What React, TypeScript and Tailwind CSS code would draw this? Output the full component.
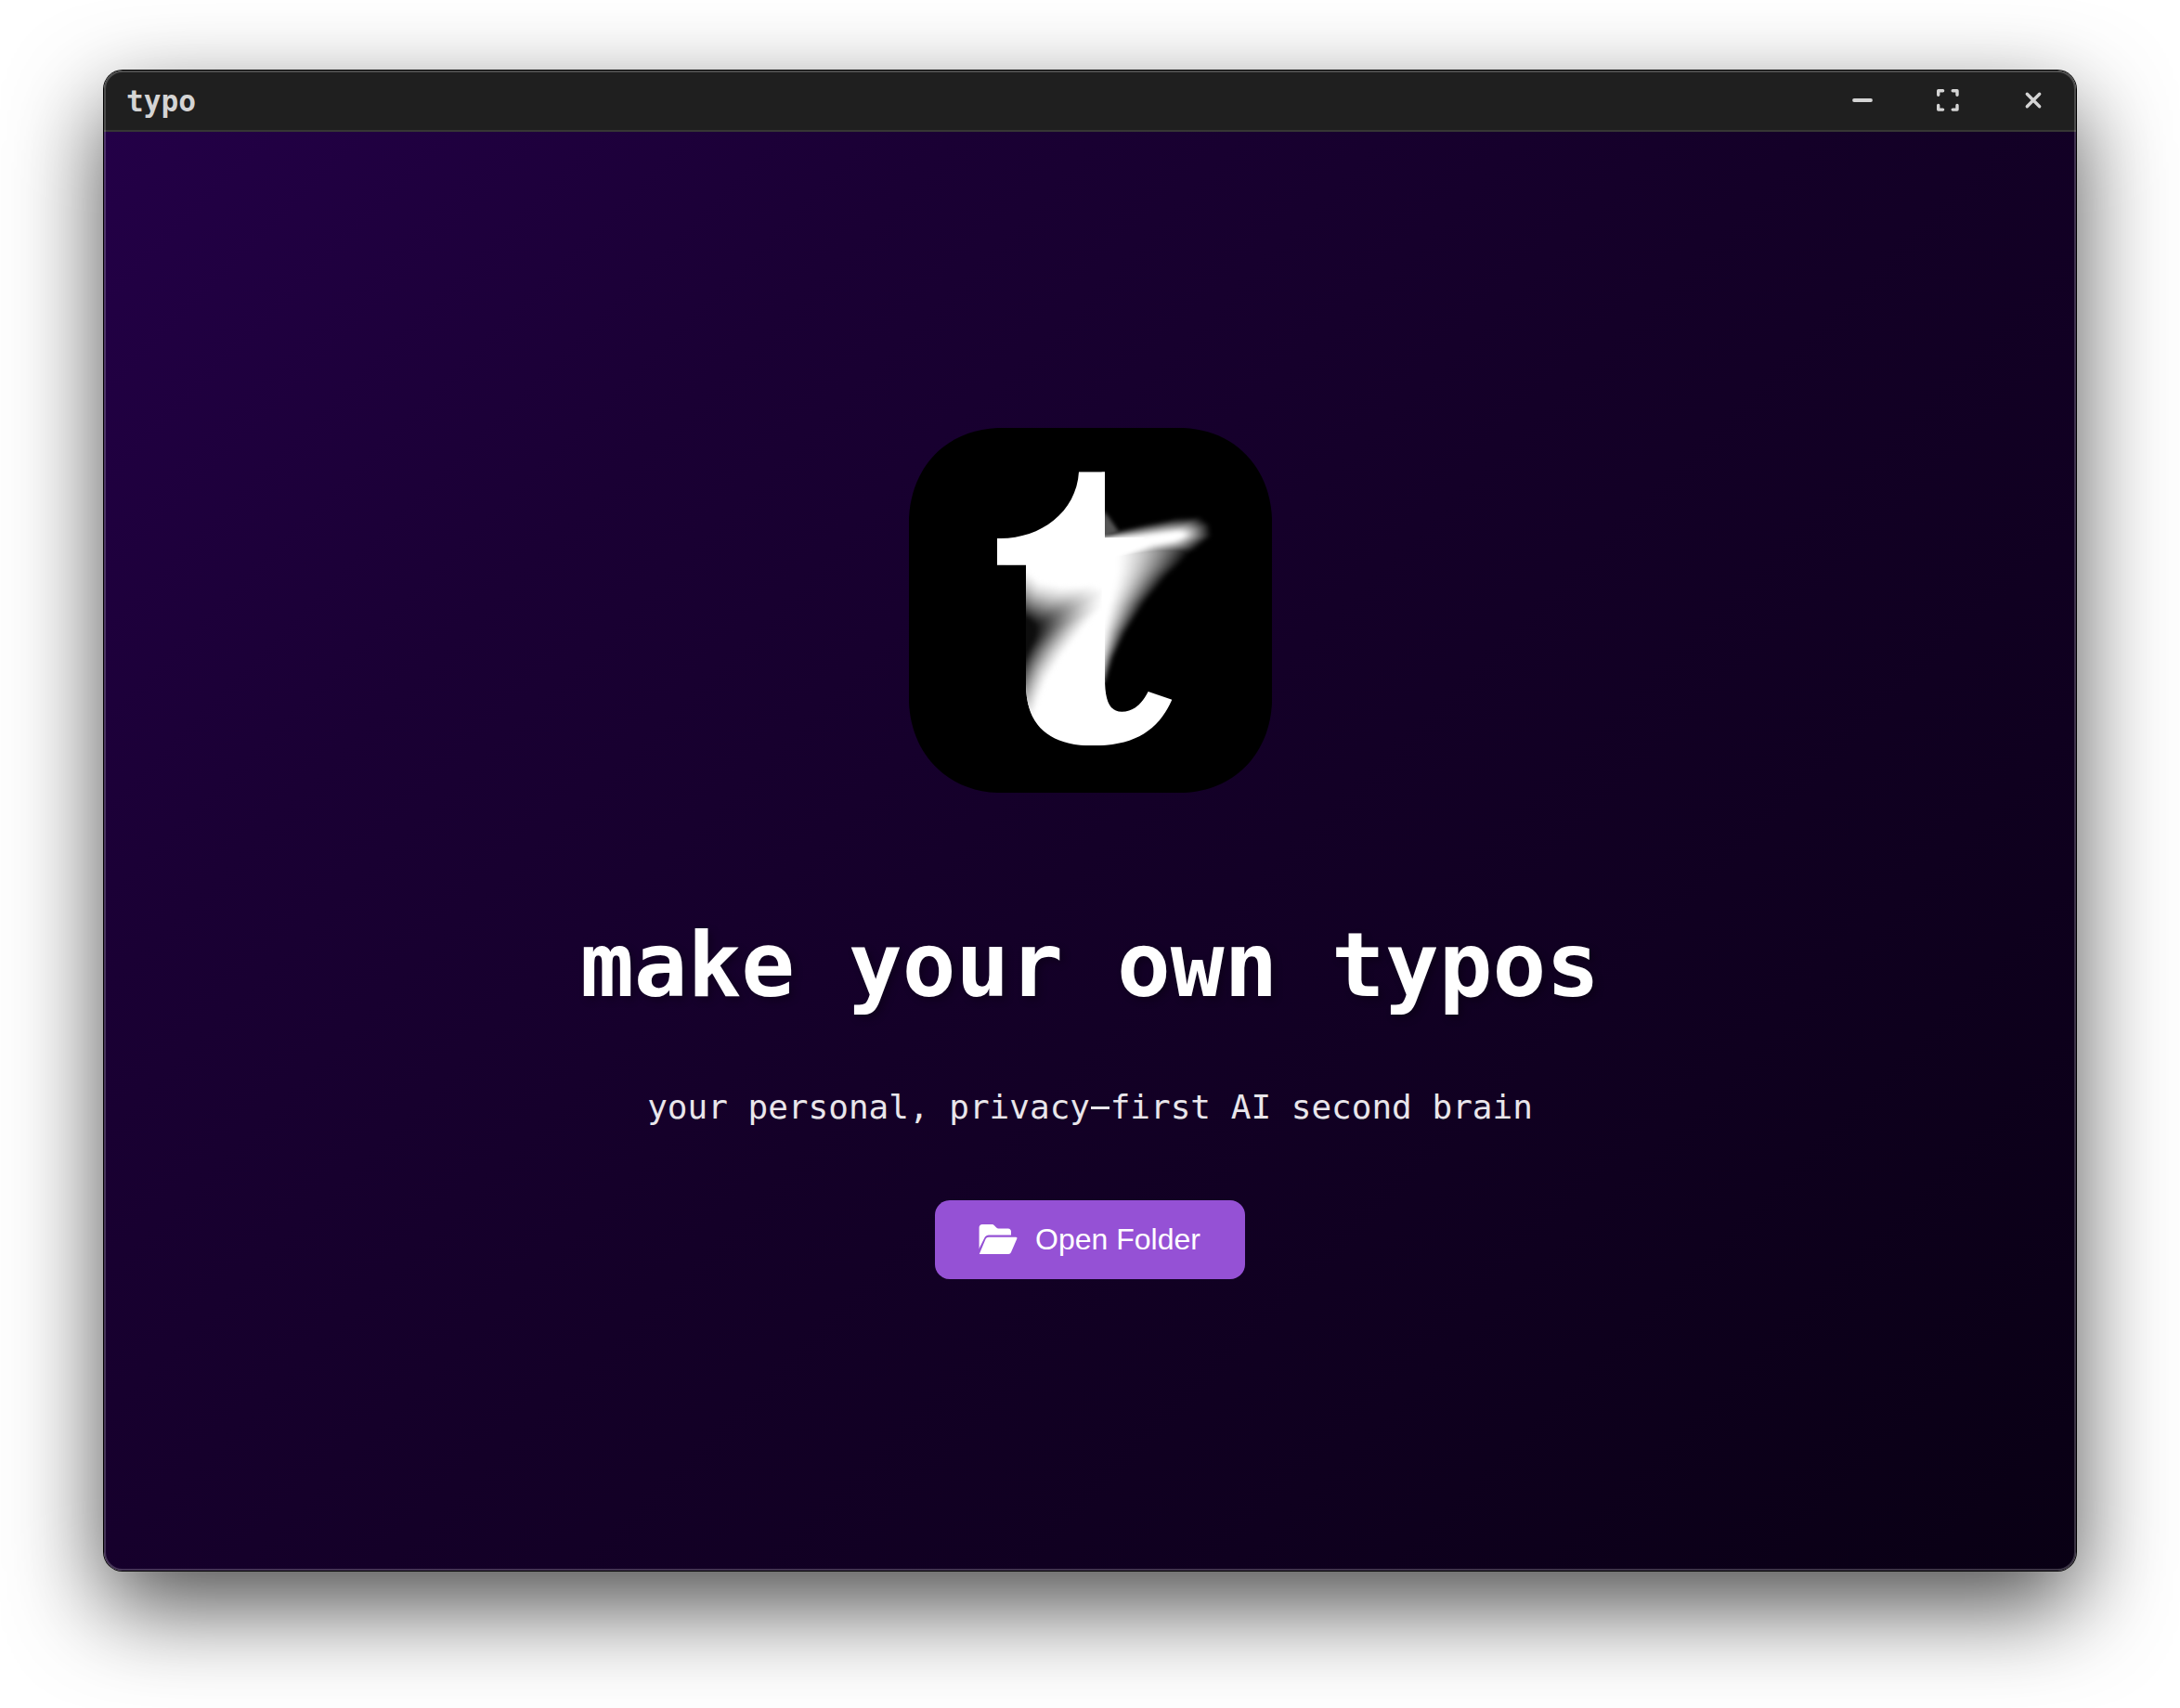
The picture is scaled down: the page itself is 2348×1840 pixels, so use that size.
const mono = "font-['DejaVu_Sans_Mono',monospace]";

function TitleBar() {
  return (
    <header className="flex h-[66px] shrink-0 items-center justify-between border-b-2 border-[#363634] bg-[#1f1f1f] pl-6">
      <span className={`${mono} pt-[3px] text-[31.2px] leading-none font-bold text-[#d4d4d4]`}>typo</span>
      <div className="flex items-center text-[#d4d4d4]">
        <button className="flex w-[92px] justify-center" aria-label="Minimize">
          <svg className="size-8" viewBox="0 0 32 32" fill="none" stroke="currentColor" strokeWidth="3.8" strokeLinecap="round">
            <path d="M7 16H25" />
          </svg>
        </button>
        <button className="flex w-[92px] justify-center" aria-label="Maximize">
          <svg className="size-8" viewBox="0 0 32 32" fill="none" stroke="currentColor" strokeWidth="3.4" strokeLinecap="round" strokeLinejoin="round">
            <path d="M5.7 10.3V5.7H10.6M21.2 5.7H26V10.3M26 21.4V26.1H21.2M10.6 26.1H5.7V21.4" />
          </svg>
        </button>
        <button className="flex w-[92px] justify-center" aria-label="Close">
          <svg className="size-8" viewBox="0 0 32 32" fill="none" stroke="currentColor" strokeWidth="3.4" strokeLinecap="round">
            <path d="M9.3 9.3L22.7 22.7M22.7 9.3L9.3 22.7" />
          </svg>
        </button>
      </div>
    </header>
  );
}

type Pt = [number, number];

const STEPS = 28;

/** Stack of polygons that morphs from `outer` to `inner` while its grey level changes. */
function Fade({ outer, inner, shade }: { outer: Pt[]; inner: Pt[]; shade: (t: number) => number }) {
  return (
    <>
      {Array.from({ length: STEPS + 1 }, (_, i) => {
        const t = i / STEPS;
        const v = Math.round(255 * shade(t));
        const points = outer
          .map(([x, y], k) => `${x + (inner[k][0] - x) * t},${y + (inner[k][1] - y) * t}`)
          .join(" ");
        return <polygon key={i} points={points} fill={`rgb(${v},${v},${v})`} />;
      })}
    </>
  );
}

const armOuter: Pt[] = [[640, 388], [700, 366], [800, 342], [900, 322], [970, 320], [1002, 345], [1007, 383], [950, 430], [870, 456], [780, 490], [640, 530]];
const armInner: Pt[] = [[640, 390], [690, 390], [760, 386], [830, 378], [890, 370], [915, 374], [912, 386], [880, 398], [810, 410], [740, 438], [640, 490]];
const tailOuter: Pt[] = [[600, 390], [860, 400], [955, 415], [912, 468], [868, 508], [795, 595], [730, 695], [690, 775], [666, 850], [600, 900]];
const tailInner: Pt[] = [[600, 390], [690, 400], [700, 450], [698, 500], [690, 545], [672, 610], [656, 690], [645, 775], [635, 850], [600, 900]];
const hollowOuter: Pt[] = [[340, 480], [405, 485], [450, 525], [530, 540], [630, 535], [670, 550], [660, 605], [605, 670], [530, 765], [475, 850], [448, 920], [432, 975], [340, 975]];
const hollowInner: Pt[] = [[340, 640], [400, 640], [416, 650], [430, 662], [438, 672], [440, 684], [437, 702], [430, 722], [418, 744], [408, 766], [396, 788], [385, 804], [340, 804]];

function Logo() {
  return (
    <svg className="h-[393px] w-[391px]" viewBox="27 33 1173 1179" aria-label="typo logo">
      <defs>
        <clipPath id="tBody">
          <path d="M576 175H660V840C660 915 675 950 715 950C748 950 776 932 800 885L877 911C833 1012 755 1060 620 1060C480 1060 405 995 405 860V476H312V390C445 395 568 310 576 175Z" />
        </clipPath>
        <clipPath id="rightSide">
          <rect x="659" y="175" width="400" height="700" />
        </clipPath>
        <filter id="soft" x="-20%" y="-20%" width="140%" height="140%" colorInterpolationFilters="sRGB">
          <feGaussianBlur stdDeviation="6" />
        </filter>
      </defs>
      <path d="M313 33H914C1080 40 1193 160 1200 325V920C1193 1085 1080 1205 914 1212H313C147 1205 34 1085 27 920V325C34 160 147 40 313 33Z" fill="#000" />
      <g clipPath="url(#rightSide)">
        <path d="M650 295L672 320L705 368L650 395Z" fill="#555" filter="url(#soft)" />
        <g filter="url(#soft)" className="mix-blend-lighten">
          <Fade outer={tailOuter} inner={tailInner} shade={(t) => 1 - Math.pow(1 - t, 1.4)} />
        </g>
        <g filter="url(#soft)" className="mix-blend-lighten">
          <Fade outer={armOuter} inner={armInner} shade={(t) => t} />
        </g>
        <path d="M655 388L790 387L765 404L655 474Z" fill="#fff" />
      </g>
      <g clipPath="url(#tBody)">
        <rect x="300" y="170" width="600" height="900" fill="#fff" />
        <g filter="url(#soft)">
          <Fade outer={hollowOuter} inner={hollowInner} shade={(t) => 1 - 0.95 * Math.pow(t, 1.4)} />
        </g>
        <rect x="650" y="175" width="12" height="680" fill="#fff" />
      </g>
    </svg>
  );
}

function FolderIcon() {
  return (
    <svg className="h-[34px] w-[42px]" viewBox="0 0 42 34" fill="currentColor" aria-hidden="true">
      <path d="M0.6 27.5V4.5C0.6 2.3 2 1 4 1H14.2C15.4 1 16.2 1.4 17 2.2L19.2 4.6C19.8 5.2 20.6 5.6 21.5 5.6H31.8C33.8 5.6 35 7 35 8.8V12.5H11C9 12.5 7.6 13.4 6.6 15.1L1.2 25.8Z" />
      <path d="M7.6 16.8C8.3 15.4 9.4 14.7 11 14.7H40.2C41.2 14.7 41.8 15.5 41.3 16.5L35 31C34.4 32.3 33.6 32.9 32.2 32.9H0.8Z" />
    </svg>
  );
}

export default function App() {
  return (
    <div className="flex h-[1840px] w-[2348px] justify-center overflow-hidden bg-white pt-[76px]">
      <main className="relative flex h-[1616px] w-[2124px] flex-col overflow-hidden rounded-[20px] shadow-[0_0_0_1px_#000,0_38px_100px_rgba(0,0,0,0.7)]">
        <TitleBar />
        <section className="flex flex-1 flex-col items-center bg-[linear-gradient(135deg,#230047_0%,#1a0034_25%,#140028_50%,#0f001f_75%,#090014_100%)] pt-[319px]">
          <Logo />
          <h1 className={`${mono} mt-[130px] text-[96px] leading-[112px] font-bold whitespace-pre text-white [text-shadow:4px_4px_8px_rgba(0,0,0,0.3)]`}>
            make your own typos
          </h1>
          <p className={`${mono} mt-[76px] text-[36px] leading-[42px] whitespace-pre text-[#e9e6eb]`}>
            your personal, privacy<span className="relative -top-[2px] after:absolute after:top-[22px] after:left-[1.5px] after:h-[3px] after:w-5 after:bg-[#e9e6eb]">-</span>first AI second brain
          </p>
          <button className="mt-[79px] flex h-[85px] w-[334px] items-center rounded-2xl bg-[#9551d5] pb-[2px] pl-[47px] font-['Liberation_Sans',sans-serif] text-[32px] text-white">
            <FolderIcon />
            <span className="ml-[19px]">Open Folder</span>
          </button>
        </section>
        <div className="pointer-events-none absolute inset-0 rounded-[20px] border-2 border-white/20" />
      </main>
    </div>
  );
}
